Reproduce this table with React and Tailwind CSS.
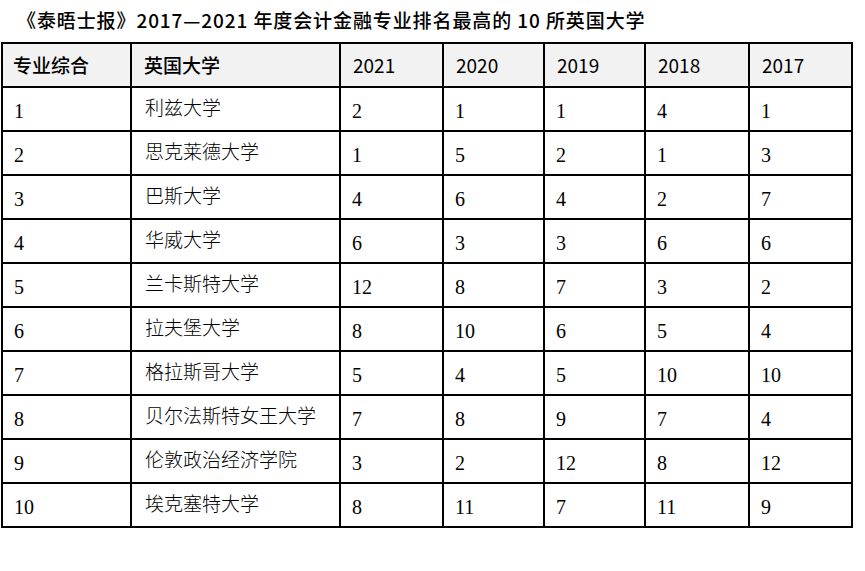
const years = ["2021", "2020", "2019", "2018", "2017"];

const rows = [
  ["1", "利兹大学", "2", "1", "1", "4", "1"],
  ["2", "思克莱德大学", "1", "5", "2", "1", "3"],
  ["3", "巴斯大学", "4", "6", "4", "2", "7"],
  ["4", "华威大学", "6", "3", "3", "6", "6"],
  ["5", "兰卡斯特大学", "12", "8", "7", "3", "2"],
  ["6", "拉夫堡大学", "8", "10", "6", "5", "4"],
  ["7", "格拉斯哥大学", "5", "4", "5", "10", "10"],
  ["8", "贝尔法斯特女王大学", "7", "8", "9", "7", "4"],
  ["9", "伦敦政治经济学院", "3", "2", "12", "8", "12"],
  ["10", "埃克塞特大学", "8", "11", "7", "11", "9"],
];

const cjk = "font-['Noto_Sans_CJK_SC',sans-serif]";
const num = "font-['Liberation_Serif','Noto_Sans_CJK_SC',serif]";

export default function App() {
  return (
    <div className="w-[865px] h-[571px] bg-white text-black">
      {/* 标题 */}
      <h1 className={`${cjk} h-[42px] pl-[17px] pt-[6px] text-[19px] leading-[28px] tracking-[0.9px] font-medium`}>
        《泰晤士报》2017—2021 年度会计金融专业排名最高的 10 所英国大学
      </h1>

      {/* 表格 */}
      <div className="ml-[1px] w-[852px] grid grid-cols-[127px_207px_101px_99px_99px_102px_101px] auto-rows-[42px] gap-[2px] p-[2px] bg-black">
        <div className={`${cjk} bg-[#f2f2f2] flex items-center pl-[10px] text-[19px] font-medium`}>专业综合</div>
        <div className={`${cjk} bg-[#f2f2f2] flex items-center pl-[12px] text-[19px] font-medium`}>英国大学</div>
        {years.map((y) => (
          <div key={y} className={`${cjk} bg-[#f2f2f2] flex items-center pl-[12px] text-[19px]`}>
            {y}
          </div>
        ))}

        {rows.map((r) => (
          <>
            <div key={r[0] + "a"} className={`${num} bg-white flex items-center pl-[11px] pt-[3px] text-[20px]`}>{r[0]}</div>
            <div key={r[0] + "b"} className={`${cjk} bg-white flex items-center pl-[13px] pb-[4px] text-[19px] font-light`}>{r[1]}</div>
            {r.slice(2).map((v, i) => (
              <div key={r[0] + i} className={`${num} bg-white flex items-center pl-[11px] pt-[3px] text-[20px]`}>
                {v}
              </div>
            ))}
          </>
        ))}
      </div>
    </div>
  );
}
